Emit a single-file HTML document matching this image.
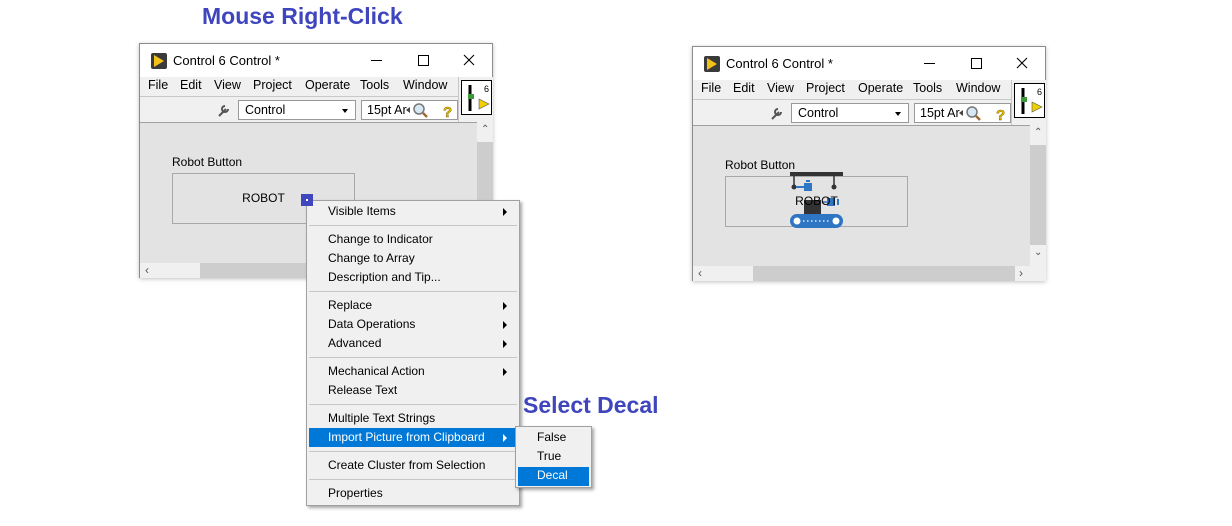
<!DOCTYPE html>
<html><head><meta charset="utf-8"><style>
*{box-sizing:border-box;margin:0;padding:0}
body{width:1232px;height:526px;background:#fff;position:relative;overflow:hidden;font-family:"Liberation Sans",Arial,sans-serif;font-size:12px;color:#000}
.a{position:absolute}
.h{font-weight:bold;font-size:23px;color:#3f46bd;letter-spacing:0}
.win{position:absolute;width:354px;height:235px;border:1px solid #8c8c8c;background:#fff;box-shadow:0 1px 4px rgba(0,0,0,.25)}
.win .t{position:absolute;top:0;left:0;right:0;height:33px;background:#fff}
.win .mb{position:absolute;top:33px;left:0;width:318px;height:20px;background:#f0f0f0;border-bottom:1px solid #c8c8c8}
.win .tb{position:absolute;top:53px;left:0;width:318px;height:25px;background:#f0f0f0}
.win .rp{position:absolute;top:33px;left:318px;width:35px;height:45px;background:#f0f0f0;border-left:1px solid #c8c8c8}
.win .ct{position:absolute;top:78px;left:0;width:337px;height:141px;background:#e3e3e3;border-top:1px solid #a0a0a0}
.win .vs{position:absolute;top:78px;left:337px;width:16px;height:141px;background:#f0f0f0}
.win .hs{position:absolute;top:219px;left:0;width:337px;height:15px;background:#f0f0f0}
.m{position:absolute;top:1px;font-size:12.5px}
.menu{position:absolute;background:#f0f0f0;border:1px solid #a0a0a0;box-shadow:2px 2px 3px rgba(0,0,0,.35)}
.it{position:absolute;left:21px;font-size:12px;line-height:19px}
.sep{position:absolute;left:2px;right:2px;height:1px;background:#c6c6c6}
.ar{position:absolute;width:0;height:0;border-top:4px solid transparent;border-bottom:4px solid transparent;border-left:4px solid #000}
</style></head><body>
<div class="a h" style="left:202px;top:3px">Mouse Right-Click</div>
<div class="a h" style="left:523px;top:392px">Select Decal</div>

<div class="win" style="left:139px;top:43px">
 <div class="t">
  <div class="a" style="left:11px;top:9px;width:16px;height:16px;background:#3a3a3a;border-radius:2px"></div>
  <div class="a" style="left:14px;top:11px;width:0;height:0;border-top:6px solid transparent;border-bottom:6px solid transparent;border-left:10px solid #f2c21b"></div>
  <div class="a" style="left:33px;top:9px;font-size:13px">Control 6 Control *</div>
  <div class="a" style="left:231px;top:16px;width:11px;height:1px;background:#000"></div>
  <div class="a" style="left:278px;top:11px;width:11px;height:11px;border:1px solid #000"></div>
  <svg class="a" style="left:323px;top:10px" width="12" height="12"><path d="M1 1L11 11M11 1L1 11" stroke="#000" stroke-width="1.1"/></svg>
 </div>
 <div class="mb">
  <span class="m" style="left:8px">File</span><span class="m" style="left:40px">Edit</span><span class="m" style="left:74px">View</span><span class="m" style="left:113px">Project</span><span class="m" style="left:165px">Operate</span><span class="m" style="left:220px">Tools</span><span class="m" style="left:263px">Window</span>
 </div>
 <div class="tb">
  <svg class="a" style="left:76px;top:5px" width="16" height="16"><path d="M3 14L10 7M9 4a3 3 0 1 0 3 3" stroke="#555" stroke-width="2" fill="none"/></svg>
  <div class="a" style="left:98px;top:3px;width:118px;height:20px;background:#fff;border:1px solid #999"><span class="a" style="left:6px;top:2px;font-size:12.5px">Control</span><div class="a" style="left:103px;top:8px;border-left:3px solid transparent;border-right:3px solid transparent;border-top:4px solid #000"></div></div>
  <div class="a" style="left:221px;top:3px;width:97px;height:20px;background:#fff;border:1px solid #999"><span class="a" style="left:5px;top:2px;font-size:12.5px">15pt Ar</span>
   <svg class="a" style="left:42px;top:1px" width="50" height="18"><path d="M2 8l4-3v6z" fill="#444"/><circle cx="15" cy="7" r="5" fill="#d7e8f5" stroke="#777" stroke-width="1.5"/><path d="M19 11l4 4" stroke="#a06a30" stroke-width="2.5"/><text x="39" y="15" font-size="15" font-weight="bold" fill="#e8c800" stroke="#806000" stroke-width=".5" font-family="Liberation Sans">?</text></svg></div>
 </div>
 <div class="rp"><div class="a" style="left:2px;top:3px;width:31px;height:35px;background:#fff;border:1px solid #000">
  <svg width="30" height="34"><path d="M8 4v26" stroke="#000" stroke-width="3"/><rect x="6" y="13" width="6" height="5" fill="#3a9a3a"/><text x="22" y="11" font-size="9" font-family="Liberation Sans">6</text><path d="M17 18v10l10-5z" fill="#f0d000" stroke="#555" stroke-width=".6"/></svg></div></div>
 <div class="ct">
  <div class="a" style="left:32px;top:32px;font-size:12px">Robot Button</div>
  <div class="a" style="left:32px;top:50px;width:183px;height:51px;border:1px solid #a8a8a8"></div>
  <div class="a" style="left:32px;top:68px;width:183px;text-align:center;font-size:12px">ROBOT</div>
 </div>
 <div class="vs"><div class="a" style="left:0;top:20px;width:16px;height:100px;background:#cdcdcd"></div><span class="a" style="left:4px;top:2px;font-size:10px;color:#555">&#8963;</span></div>
 <div class="hs"><div class="a" style="left:60px;top:0;width:240px;height:15px;background:#cdcdcd"></div><span class="a" style="left:5px;top:0px;font-size:12px;color:#555">&lsaquo;</span></div>
</div>

<div class="win" style="left:692px;top:46px">
 <div class="t">
  <div class="a" style="left:11px;top:9px;width:16px;height:16px;background:#3a3a3a;border-radius:2px"></div>
  <div class="a" style="left:14px;top:11px;width:0;height:0;border-top:6px solid transparent;border-bottom:6px solid transparent;border-left:10px solid #f2c21b"></div>
  <div class="a" style="left:33px;top:9px;font-size:13px">Control 6 Control *</div>
  <div class="a" style="left:231px;top:16px;width:11px;height:1px;background:#000"></div>
  <div class="a" style="left:278px;top:11px;width:11px;height:11px;border:1px solid #000"></div>
  <svg class="a" style="left:323px;top:10px" width="12" height="12"><path d="M1 1L11 11M11 1L1 11" stroke="#000" stroke-width="1.1"/></svg>
 </div>
 <div class="mb">
  <span class="m" style="left:8px">File</span><span class="m" style="left:40px">Edit</span><span class="m" style="left:74px">View</span><span class="m" style="left:113px">Project</span><span class="m" style="left:165px">Operate</span><span class="m" style="left:220px">Tools</span><span class="m" style="left:263px">Window</span>
 </div>
 <div class="tb">
  <svg class="a" style="left:76px;top:5px" width="16" height="16"><path d="M3 14L10 7M9 4a3 3 0 1 0 3 3" stroke="#555" stroke-width="2" fill="none"/></svg>
  <div class="a" style="left:98px;top:3px;width:118px;height:20px;background:#fff;border:1px solid #999"><span class="a" style="left:6px;top:2px;font-size:12.5px">Control</span><div class="a" style="left:103px;top:8px;border-left:3px solid transparent;border-right:3px solid transparent;border-top:4px solid #000"></div></div>
  <div class="a" style="left:221px;top:3px;width:97px;height:20px;background:#fff;border:1px solid #999"><span class="a" style="left:5px;top:2px;font-size:12.5px">15pt Ar</span>
   <svg class="a" style="left:42px;top:1px" width="50" height="18"><path d="M2 8l4-3v6z" fill="#444"/><circle cx="15" cy="7" r="5" fill="#d7e8f5" stroke="#777" stroke-width="1.5"/><path d="M19 11l4 4" stroke="#a06a30" stroke-width="2.5"/><text x="39" y="15" font-size="15" font-weight="bold" fill="#e8c800" stroke="#806000" stroke-width=".5" font-family="Liberation Sans">?</text></svg></div>
 </div>
 <div class="rp"><div class="a" style="left:2px;top:3px;width:31px;height:35px;background:#fff;border:1px solid #000">
  <svg width="30" height="34"><path d="M8 4v26" stroke="#000" stroke-width="3"/><rect x="6" y="13" width="6" height="5" fill="#3a9a3a"/><text x="22" y="11" font-size="9" font-family="Liberation Sans">6</text><path d="M17 18v10l10-5z" fill="#f0d000" stroke="#555" stroke-width=".6"/></svg></div></div>
 <div class="ct">
  <div class="a" style="left:32px;top:32px;font-size:12px">Robot Button</div>
  <div class="a" style="left:32px;top:50px;width:183px;height:51px;border:1px solid #a8a8a8"></div>
  <svg class="a" style="left:96px;top:46px" width="56" height="58">
   <rect x="1" y="0" width="53" height="4" fill="#333"/>
   <path d="M5 4v11M45 4v11" stroke="#333" stroke-width="1.5"/>
   <circle cx="5" cy="15" r="2.5" fill="#333"/><circle cx="45" cy="15" r="2.5" fill="#333"/>
   <path d="M7 15h8" stroke="#2e75c4" stroke-width="2"/><path d="M15 11h8v8h-8z" fill="#2e75c4"/><rect x="17" y="8" width="4" height="2" fill="#2e75c4"/>
   <rect x="38" y="26" width="8" height="8" fill="#2e75c4"/><rect x="48" y="27" width="2" height="6" fill="#2e75c4"/><path d="M33 30h5" stroke="#2e75c4" stroke-width="1.5"/>
   <rect x="15" y="28" width="17" height="14" fill="#333"/>
   <rect x="1" y="42" width="53" height="14" rx="7" fill="#2e75c4"/>
   <circle cx="8" cy="49" r="3.5" fill="#fff"/><circle cx="47" cy="49" r="3.5" fill="#fff"/>
   <path d="M14 49h28" stroke="#fff" stroke-width="1.3" stroke-dasharray="1.5 2.5"/>
  </svg>
  <div class="a" style="left:32px;top:68px;width:183px;text-align:center;font-size:12px">ROBOT</div>
 </div>
 <div class="vs"><div class="a" style="left:0;top:20px;width:16px;height:100px;background:#cdcdcd"></div><span class="a" style="left:4px;top:2px;font-size:10px;color:#555">&#8963;</span><span class="a" style="left:4px;top:122px;font-size:10px;color:#555">&#8964;</span></div>
 <div class="hs" style="width:353px"><div class="a" style="left:60px;top:0;width:262px;height:15px;background:#cdcdcd"></div><span class="a" style="left:5px;top:0px;font-size:12px;color:#555">&lsaquo;</span><span class="a" style="left:326px;top:0px;font-size:12px;color:#555">&rsaquo;</span></div>
</div>

<div class="menu" style="left:306px;top:200px;width:214px;height:306px">
 <div class="it" style="top:1px">Visible Items</div><div class="ar" style="left:196px;top:7px"></div>
 <div class="sep" style="top:24px"></div>
 <div class="it" style="top:29px">Change to Indicator</div>
 <div class="it" style="top:48px">Change to Array</div>
 <div class="it" style="top:67px">Description and Tip...</div>
 <div class="sep" style="top:90px"></div>
 <div class="it" style="top:95px">Replace</div><div class="ar" style="left:196px;top:101px"></div>
 <div class="it" style="top:114px">Data Operations</div><div class="ar" style="left:196px;top:120px"></div>
 <div class="it" style="top:133px">Advanced</div><div class="ar" style="left:196px;top:139px"></div>
 <div class="sep" style="top:156px"></div>
 <div class="it" style="top:161px">Mechanical Action</div><div class="ar" style="left:196px;top:167px"></div>
 <div class="it" style="top:180px">Release Text</div>
 <div class="sep" style="top:203px"></div>
 <div class="it" style="top:208px">Multiple Text Strings</div>
 <div class="a" style="left:2px;top:227px;width:208px;height:19px;background:#0078d7"></div>
 <div class="it" style="top:227px;color:#fff">Import Picture from Clipboard</div><div class="ar" style="left:196px;top:233px;border-left-color:#fff"></div>
 <div class="sep" style="top:250px"></div>
 <div class="it" style="top:255px">Create Cluster from Selection</div>
 <div class="sep" style="top:278px"></div>
 <div class="it" style="top:283px">Properties</div>
</div>

<div class="a" style="left:301px;top:194px;width:12px;height:12px;background:#3f46c0"><div class="a" style="left:5px;top:5px;width:2px;height:2px;background:#fff"></div></div>

<div class="menu" style="left:515px;top:426px;width:77px;height:62px">
 <div class="it" style="top:1px">False</div>
 <div class="it" style="top:20px">True</div>
 <div class="a" style="left:2px;top:40px;width:71px;height:19px;background:#0078d7"></div>
 <div class="it" style="top:39px;color:#fff">Decal</div>
</div>
</body></html>
